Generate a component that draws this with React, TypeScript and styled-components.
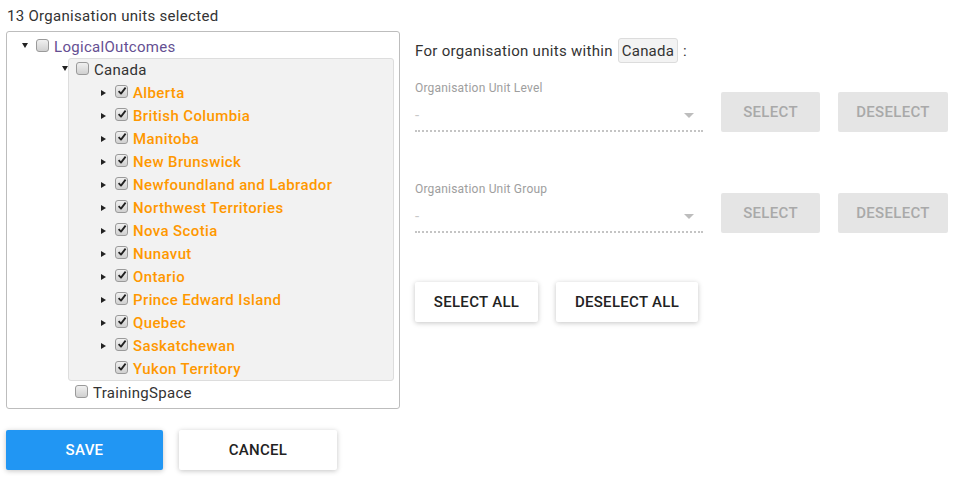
import React from 'react';
import styled, { createGlobalStyle } from 'styled-components';

const Global = createGlobalStyle`
  html, body { margin: 0; padding: 0; background: #fff; }
  body { font-family: Roboto, "Noto Sans", Arial, sans-serif; color: #333; }
  ul { list-style: none; margin: 0; padding: 0; }
`;

const Page = styled.div`
  padding: 6px;
  width: 963px;
  box-sizing: border-box;
`;

const Title = styled.div`
  font-size: 15px;
  letter-spacing: 0.3px;
  line-height: 20px;
  padding-left: 1px;
  margin-bottom: 5px;
  color: #333;
`;

const Main = styled.div`
  display: flex;
  gap: 15px;
  align-items: flex-start;
`;

const TreeBox = styled.div`
  width: 394px;
  height: 378px;
  box-sizing: border-box;
  border: 1px solid #bdbdbd;
  border-radius: 3px;
  padding: 3px 5px 3px 0;
`;

const RootList = styled.ul`
  padding-left: 22px !important;
`;

const ChildList = styled.ul`
  padding-left: 39px !important;
`;

const Node = styled.li<{ $highlight?: boolean }>`
  ${(p) =>
    p.$highlight
      ? `background: #f2f2f2; border: 1px solid #dddddd; border-radius: 3px;`
      : ''}
`;

const Row = styled.div<{ $h?: number }>`
  display: flex;
  align-items: center;
  height: ${(p) => p.$h ?? 23}px;
  margin-left: -7px;
`;

const Toggle = styled.span`
  width: 14px;
  height: 12px;
  display: flex;
  align-items: center;
  flex: none;
`;

const ArrowDown = styled.span`
  width: 0;
  height: 0;
  border-left: 3px solid transparent;
  border-right: 3px solid transparent;
  border-top: 5px solid #222;
  margin-top: -3px;
`;

const ArrowRight = styled.span`
  width: 0;
  height: 0;
  border-top: 3px solid transparent;
  border-bottom: 3px solid transparent;
  border-left: 5px solid #222;
`;

const Box = styled.span`
  width: 13px;
  height: 13px;
  box-sizing: border-box;
  border: 1px solid #9a9a9a;
  border-radius: 3px;
  background: linear-gradient(#f0f0f0, #d0d0d0);
  flex: none;
  display: flex;
  align-items: center;
  justify-content: center;
  margin-top: -3px;
`;

const Label = styled.span<{ $tone: 'root' | 'plain' | 'selected' }>`
  margin-left: 5px;
  font-size: 15px;
  letter-spacing: ${(p) => (p.$tone === 'selected' ? 0.38 : 0.3)}px;
  white-space: nowrap;
  color: ${(p) => (p.$tone === 'root' ? '#654f92' : p.$tone === 'selected' ? '#ff9800' : '#333')};
  font-weight: ${(p) => (p.$tone === 'selected' ? 500 : 400)};
`;

const Check = ({ checked }: { checked: boolean }) => (
  <Box>
    {checked && (
      <svg width="10" height="10" viewBox="0 0 10 10">
        <path d="M1.6 5.2 L4 7.6 L8.6 1.6" fill="none" stroke="#222" strokeWidth="1.8" strokeLinejoin="round" />
      </svg>
    )}
  </Box>
);

type Toggled = 'open' | 'closed' | 'none';

const TreeRow = ({
  toggle,
  checked,
  label,
  tone,
  h,
}: {
  toggle: Toggled;
  checked: boolean;
  label: string;
  tone: 'root' | 'plain' | 'selected';
  h?: number;
}) => (
  <Row $h={h}>
    <Toggle>{toggle === 'open' ? <ArrowDown /> : toggle === 'closed' ? <ArrowRight /> : null}</Toggle>
    <Check checked={checked} />
    <Label $tone={tone}>{label}</Label>
  </Row>
);

const provinces = [
  'Alberta',
  'British Columbia',
  'Manitoba',
  'New Brunswick',
  'Newfoundland and Labrador',
  'Northwest Territories',
  'Nova Scotia',
  'Nunavut',
  'Ontario',
  'Prince Edward Island',
  'Quebec',
  'Saskatchewan',
  'Yukon Territory',
];

const Right = styled.div`
  display: flex;
  flex-direction: column;
  padding-top: 7px;
`;

const Heading = styled.div`
  display: flex;
  align-items: center;
  font-size: 15px;
  letter-spacing: 0.3px;
  height: 25px;
  color: #333;
  white-space: pre;
`;

const Chip = styled.span`
  display: inline-flex;
  align-items: center;
  height: 25px;
  box-sizing: border-box;
  padding: 0 3px;
  margin-left: 5px;
  margin-right: 5px;
  letter-spacing: 0.2px;
  background: #f3f3f3;
  border: 1px solid #dcdcdc;
  border-radius: 3px;
`;

const FieldRow = styled.div<{ $top: number }>`
  display: flex;
  align-items: flex-end;
  gap: 18px;
  margin-top: ${(p) => p.$top}px;
`;

const Field = styled.div`
  width: 288px;
  display: flex;
  flex-direction: column;
`;

const FieldLabel = styled.div`
  font-size: 12px;
  letter-spacing: 0.2px;
  line-height: 14px;
  color: #9e9e9e;
`;

const Value = styled.div`
  margin-top: 10px;
  height: 20px;
  line-height: 20px;
  font-size: 15px;
  color: #c8c8c8;
  display: flex;
  align-items: center;
  justify-content: space-between;
  padding-right: 9px;
`;

const Caret = styled.span`
  width: 0;
  height: 0;
  border-left: 5px solid transparent;
  border-right: 5px solid transparent;
  border-top: 5px solid #bdbdbd;
`;

const Underline = styled.div`
  margin-top: 5px;
  border-top: 2px dotted #c4c4c4;
`;

const FlatButton = styled.button<{ $w: number }>`
  width: ${(p) => p.$w}px;
  height: 40px;
  border: none;
  border-radius: 2px;
  background: #e5e5e5;
  color: #a9a9a9;
  font-family: Roboto, "Noto Sans", Arial, sans-serif;
  font-size: 15px;
  letter-spacing: 0.3px;
  font-weight: 500;
  padding: 0;
`;

const RaisedButton = styled.button<{ $w: number; $primary?: boolean }>`
  width: ${(p) => p.$w}px;
  height: 40px;
  border: none;
  border-radius: 2px;
  background: ${(p) => (p.$primary ? '#2196f3' : '#fff')};
  color: ${(p) => (p.$primary ? '#fff' : '#222')};
  box-shadow: 0 1px 6px rgba(0, 0, 0, 0.12), 0 1px 4px rgba(0, 0, 0, 0.12);
  font-family: Roboto, "Noto Sans", Arial, sans-serif;
  font-size: 15px;
  letter-spacing: 0.3px;
  font-weight: 500;
  padding: 0;
`;

const ButtonRow = styled.div<{ $top: number; $gap: number }>`
  display: flex;
  gap: ${(p) => p.$gap}px;
  margin-top: ${(p) => p.$top}px;
`;

const SelectBlock = ({ label, top }: { label: string; top: number }) => (
  <FieldRow $top={top}>
    <Field>
      <FieldLabel>{label}</FieldLabel>
      <Value>
        <span>-</span>
        <Caret />
      </Value>
      <Underline />
    </Field>
    <FlatButton $w={99}>SELECT</FlatButton>
    <FlatButton $w={110}>DESELECT</FlatButton>
  </FieldRow>
);

export default function App() {
  return (
    <Page>
      <Global />
      <Title>13 Organisation units selected</Title>
      <Main>
        <TreeBox>
          <RootList>
            <Node>
              <TreeRow toggle="open" checked={false} label="LogicalOutcomes" tone="root" />
              <ChildList>
                <Node $highlight>
                  <TreeRow toggle="open" checked={false} label="Canada" tone="plain" h={22} />
                  <ChildList>
                    {provinces.map((p, i) => (
                      <Node key={p}>
                        <TreeRow
                          toggle={i === provinces.length - 1 ? 'none' : 'closed'}
                          checked
                          label={p}
                          tone="selected"
                        />
                      </Node>
                    ))}
                  </ChildList>
                </Node>
                <Node>
                  <TreeRow toggle="none" checked={false} label="TrainingSpace" tone="plain" />
                </Node>
              </ChildList>
            </Node>
          </RootList>
        </TreeBox>
        <Right>
          <Heading>
            For organisation units within<Chip>Canada</Chip>:
          </Heading>
          <SelectBlock label="Organisation Unit Level" top={18} />
          <SelectBlock label="Organisation Unit Group" top={50} />
          <ButtonRow $top={49} $gap={18}>
            <RaisedButton $w={123}>SELECT ALL</RaisedButton>
            <RaisedButton $w={142}>DESELECT ALL</RaisedButton>
          </ButtonRow>
        </Right>
      </Main>
      <ButtonRow $top={21} $gap={16}>
        <RaisedButton $w={157} $primary>
          SAVE
        </RaisedButton>
        <RaisedButton $w={158}>CANCEL</RaisedButton>
      </ButtonRow>
    </Page>
  );
}
